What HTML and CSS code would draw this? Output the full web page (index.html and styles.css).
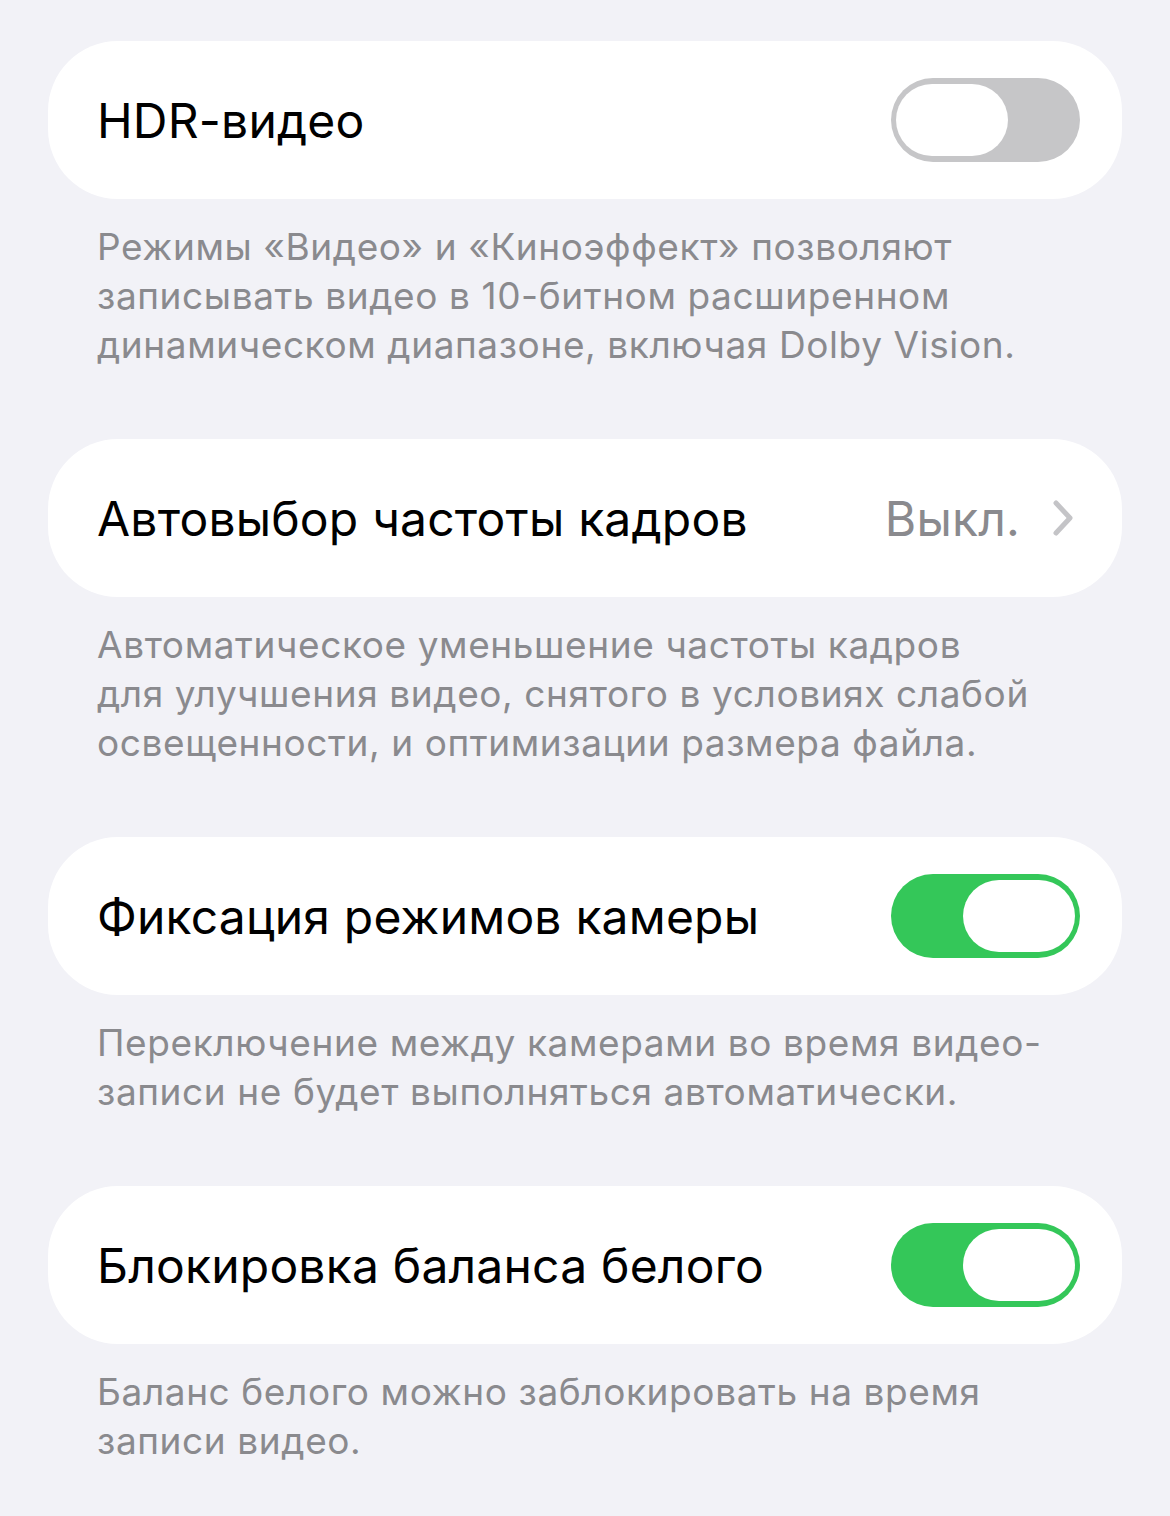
FILE: index.html
```html
<!DOCTYPE html>
<html lang="ru">
<head>
<meta charset="utf-8">
<link rel="stylesheet" href="styles.css">
</head>
<body>
<main class="list">
  <section class="group">
    <div class="cell">
      <span class="label">HDR-видео</span>
      <span class="switch off"><span class="knob"></span></span>
    </div>
    <p class="footer">Режимы «Видео» и «Киноэффект» позволяют<br>записывать видео в 10-битном расширенном<br>динамическом диапазоне, включая Dolby Vision.</p>
  </section>
  <section class="group">
    <div class="cell">
      <span class="label">Автовыбор частоты кадров</span>
      <span class="detail">Выкл.
        <svg class="chev" width="22" height="36" viewBox="0 0 22 36"><path d="M4 3 L18 18 L4 33" fill="none" stroke="#c4c4c7" stroke-width="5" stroke-linecap="round" stroke-linejoin="round"/></svg>
      </span>
    </div>
    <p class="footer">Автоматическое уменьшение частоты кадров<br>для улучшения видео, снятого в условиях слабой<br>освещенности, и оптимизации размера файла.</p>
  </section>
  <section class="group">
    <div class="cell">
      <span class="label">Фиксация режимов камеры</span>
      <span class="switch on"><span class="knob"></span></span>
    </div>
    <p class="footer">Переключение между камерами во время видео-<br>записи не будет выполняться автоматически.</p>
  </section>
  <section class="group">
    <div class="cell">
      <span class="label">Блокировка баланса белого</span>
      <span class="switch on"><span class="knob"></span></span>
    </div>
    <p class="footer">Баланс белого можно заблокировать на время<br>записи видео.</p>
  </section>
</main>
</body>
</html>
```
FILE: styles.css
```css
html, body {
  margin: 0;
  padding: 0;
  background: #f2f2f7;
}
body {
  font-family: "Inter", "Noto Sans", sans-serif;
  -webkit-font-smoothing: antialiased;
}
.list {
  padding: 41px 48px 0 48px;
  display: flex;
  flex-direction: column;
  gap: 70px;
}
.group {
  display: flex;
  flex-direction: column;
}
.cell {
  height: 158px;
  background: #fff;
  border-radius: 70px;
  display: flex;
  align-items: center;
  justify-content: space-between;
  padding: 0 42px 0 49px;
  box-sizing: border-box;
}
.label {
  font-size: 48px;
  color: #000;
  letter-spacing: 0.2px;
}
.detail {
  display: flex;
  align-items: center;
  gap: 32px;
  font-size: 48px;
  letter-spacing: 0.2px;
  color: #8a8a8e;
  padding-right: 6px;
}
.chev {
  display: block;
}
.switch {
  width: 189px;
  height: 84px;
  border-radius: 42px;
  box-sizing: border-box;
  display: flex;
  align-items: center;
  padding: 0 5px;
}
.switch.off {
  background: #c6c6c8;
  justify-content: flex-start;
}
.switch.on {
  background: #34c759;
  justify-content: flex-end;
}
.knob {
  width: 112px;
  height: 72px;
  border-radius: 36px;
  background: #fff;
}
.footer {
  margin: 23px 0 0 0;
  padding-left: 49px;
  font-size: 37px;
  line-height: 49px;
  letter-spacing: 0.6px;
  color: #8a8a8e;
}
```
